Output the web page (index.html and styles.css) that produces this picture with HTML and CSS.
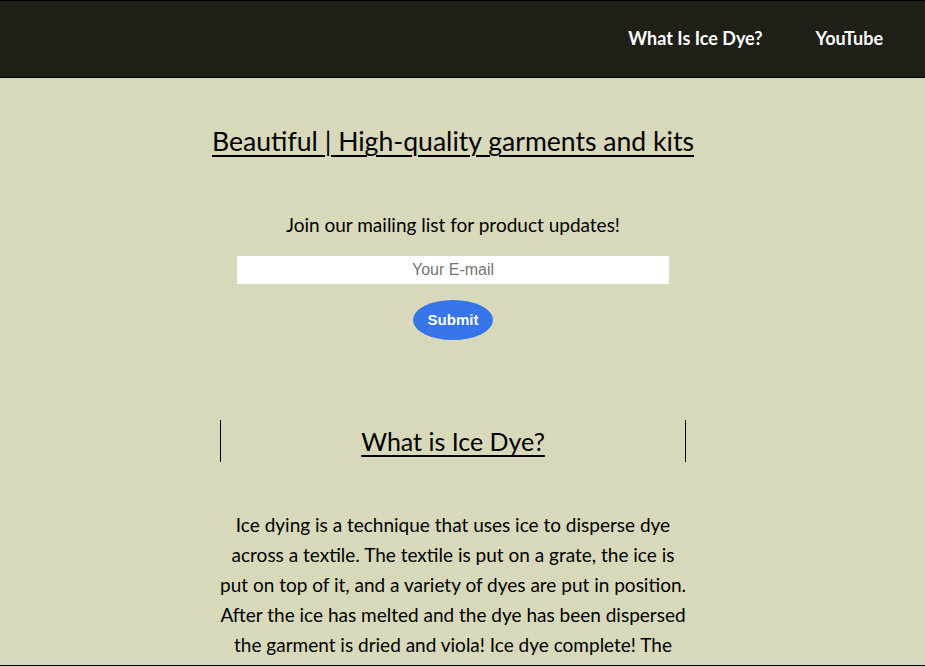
FILE: index.html
```html
<!DOCTYPE html>
<html lang="en">
<head>
<meta charset="utf-8">
<title>Ice Dye</title>
<link rel="stylesheet" href="styles.css">
</head>
<body>
<header class="topbar">
  <nav class="nav">
    <a class="nav-link" href="#what">What Is Ice Dye?</a>
    <a class="nav-link" href="#youtube">YouTube</a>
  </nav>
</header>
<main class="page">
  <h1 class="hero-title">Beautiful | High-quality garments and kits</h1>
  <p class="signup-text">Join our mailing list for product updates!</p>
  <form class="signup-form">
    <input class="email-input" type="email" placeholder="Your E-mail">
    <button class="submit-btn" type="button">Submit</button>
  </form>
  <section class="about" id="what">
    <h2 class="about-title">What is Ice Dye?</h2>
    <p class="about-text">Ice dying is a technique that uses ice to disperse dye across a textile. The textile is put on a grate, the ice is put on top of it, and a variety of dyes are put in position. After the ice has melted and the dye has been dispersed the garment is dried and viola! Ice dye complete! The</p>
  </section>
</main>
<div class="frame-line"></div>
</body>
</html>
```
FILE: styles.css
```css
html, body {
  margin: 0;
  padding: 0;
}
body {
  background: #d8d9bb;
  font-family: Lato, "Noto Sans", sans-serif;
  color: #000;
  overflow: hidden;
  height: 667px;
}
.topbar {
  background: #201f18;
  border-top: 1px solid #000;
  border-bottom: 1px solid #000;
  height: 76px;
  display: flex;
  justify-content: flex-end;
  align-items: center;
}
.nav {
  display: flex;
  gap: 53px;
  padding-right: 42px;
  padding-bottom: 2px;
}
.nav-link {
  color: #fff;
  text-decoration: none;
  font-size: 18px;
  font-weight: 700;
}
.page {
  display: flex;
  flex-direction: column;
  align-items: center;
  padding-right: 19px;
}
.hero-title {
  margin: 45px 0 0;
  font-size: 26.6px;
  line-height: 36px;
  font-weight: 400;
  text-decoration: underline;
  text-decoration-thickness: 2px;
  text-underline-offset: 4px;
}
.signup-text {
  margin: 54px 0 0;
  font-size: 19px;
  line-height: 24px;
}
.signup-form {
  display: flex;
  flex-direction: column;
  align-items: center;
  gap: 16px;
  margin-top: 19px;
}
.email-input {
  width: 432px;
  height: 28px;
  box-sizing: border-box;
  border: none;
  background: #fff;
  text-align: center;
  font-family: "Liberation Sans", Arial, sans-serif;
  font-size: 16px;
  padding: 0;
  outline: none;
}
.email-input::placeholder {
  color: #757575;
}
.submit-btn {
  width: 80px;
  height: 40px;
  border: none;
  border-radius: 50%;
  background: #3574e9;
  color: #fff;
  font-family: "Liberation Sans", Arial, sans-serif;
  font-weight: 700;
  font-size: 15px;
  padding: 0 0 1px;
}
.about {
  width: 466px;
  margin-top: 80px;
  display: flex;
  flex-direction: column;
}
.about-title {
  margin: 0;
  height: 42px;
  line-height: 42px;
  border-left: 1px solid #000;
  border-right: 1px solid #000;
  text-align: center;
  font-size: 25px;
  font-weight: 400;
  text-decoration: underline;
  text-decoration-thickness: 2px;
  text-underline-offset: 4px;
}
.about-text {
  margin: 48px 0 0;
  text-align: center;
  font-size: 19px;
  line-height: 30px;
}
.frame-line {
  position: fixed;
  left: 0;
  right: 0;
  bottom: 1px;
  height: 1px;
  background: #000;
}
```
